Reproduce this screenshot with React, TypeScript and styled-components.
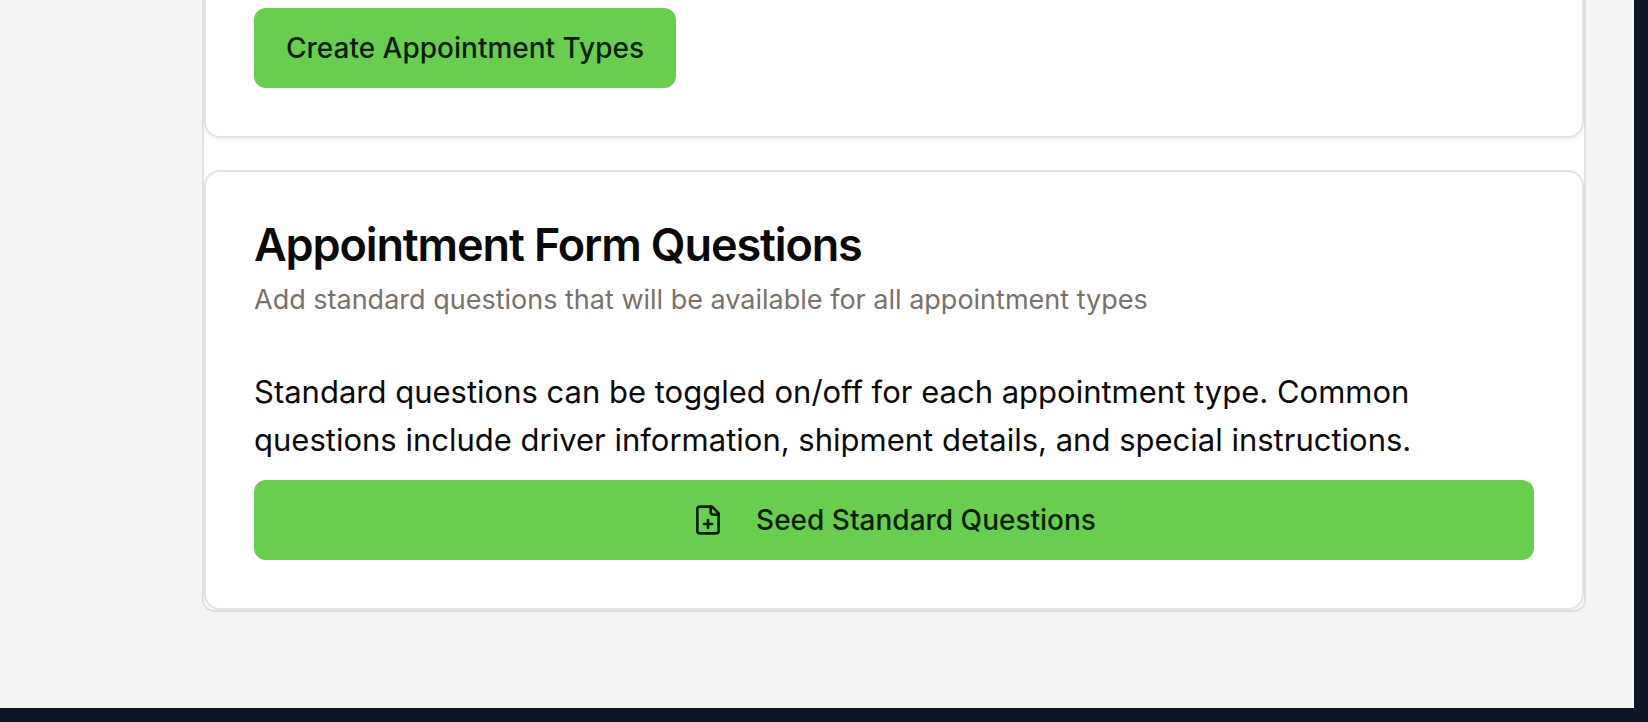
import React from "react";
import styled, { createGlobalStyle } from "styled-components";

const GlobalStyle = createGlobalStyle`
  *, *::before, *::after { box-sizing: border-box; }
  html { height: 100%; }
  body {
    margin: 0;
    min-height: 100%;
    background: #0e1524;
    color: #0c0a09;
    font-family: Inter, "Liberation Sans", sans-serif;
    font-size: 31px;
    line-height: 48px;
  }
`;

const Page = styled.main`
  margin-right: 14px;
  padding: 0 48px 96px 202px;
  background: #f5f5f5;
`;

const Panel = styled.div`
  display: flex;
  flex-direction: column;
  gap: 32px;
  border: 2px solid #e5e4e3;
  border-top: 0;
  border-radius: 0 0 12px 12px;
  background: #fff;
`;

const Card = styled.section<{ $continued?: boolean }>`
  padding: ${(p) => (p.$continued ? "8px 48px 48px" : "48px")};
  border: 2px solid #e5e4e3;
  border-top-width: ${(p) => (p.$continued ? "0" : "2px")};
  border-radius: ${(p) => (p.$continued ? "0 0 16px 16px" : "16px")};
  background: #fff;
  box-shadow: 0 2px 4px rgba(0, 0, 0, 0.05);
`;

const CardHeader = styled.header`
  display: flex;
  flex-direction: column;
  gap: 10px;
  margin-bottom: 48px;
`;

const Title = styled.h2`
  margin: 0;
  font-size: 45px;
  font-weight: 600;
  line-height: 50px;
  letter-spacing: -0.025em;
`;

const Description = styled.p`
  margin: 0;
  font-size: 27px;
  line-height: 40px;
  color: #78716c;
`;

const Body = styled.div`
  display: flex;
  flex-direction: column;
  gap: 16px;
`;

const Text = styled.p`
  margin: 0;
`;

const Button = styled.button<{ $full?: boolean }>`
  display: inline-flex;
  align-items: center;
  align-self: ${(p) => (p.$full ? "stretch" : "flex-start")};
  justify-content: center;
  gap: 32px;
  height: 80px;
  padding: 0 32px;
  border: 0;
  border-radius: 12px;
  background: #69ce50;
  color: #0a1f06;
  font: 500 28px/40px Inter, "Liberation Sans", sans-serif;
  white-space: nowrap;
  cursor: pointer;
`;

const FilePlusIcon = () => (
  <svg width="32" height="32" viewBox="0 0 24 24" fill="none" stroke="currentColor" strokeWidth="2" strokeLinecap="round" strokeLinejoin="round" aria-hidden="true">
    <path d="M15 2H6a2 2 0 0 0-2 2v16a2 2 0 0 0 2 2h12a2 2 0 0 0 2-2V7Z" />
    <path d="M14 2v4a2 2 0 0 0 2 2h4" />
    <path d="M9 15h6" />
    <path d="M12 18v-6" />
  </svg>
);

export default function App() {
  return (
    <>
      <GlobalStyle />
      <Page>
        <Panel>
          <Card $continued>
            <Body>
              <Button type="button">Create Appointment Types</Button>
            </Body>
          </Card>
          <Card>
            <CardHeader>
              <Title>Appointment Form Questions</Title>
              <Description>Add standard questions that will be available for all appointment types</Description>
            </CardHeader>
            <Body>
              <Text>
                Standard questions can be toggled on/off for each appointment type. Common questions include driver
                information, shipment details, and special instructions.
              </Text>
              <Button type="button" $full>
                <FilePlusIcon />
                Seed Standard Questions
              </Button>
            </Body>
          </Card>
        </Panel>
      </Page>
    </>
  );
}
